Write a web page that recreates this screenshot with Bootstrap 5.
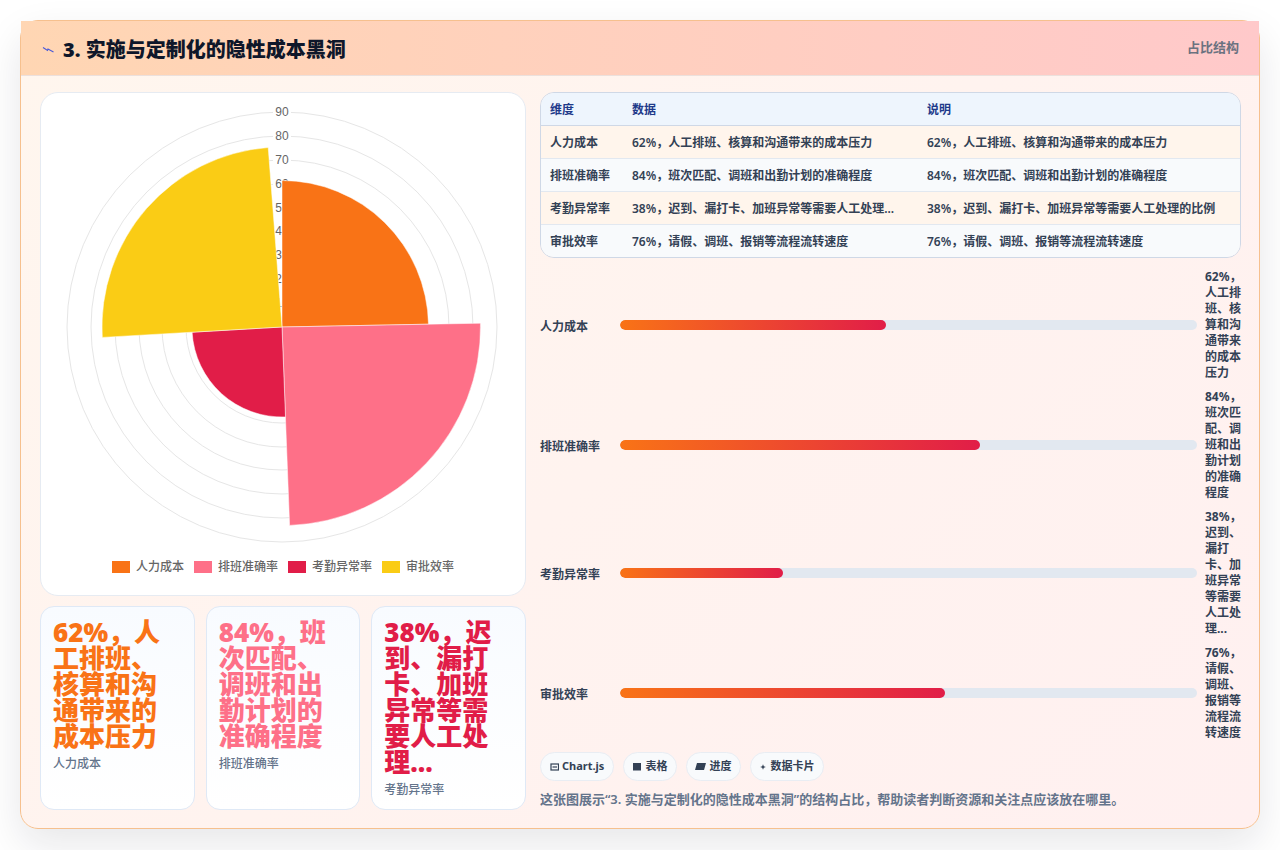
<!DOCTYPE html>
<html lang="zh-CN">
<head>
  <meta charset="UTF-8">
  <title>3. 实施与定制化的隐性成本黑洞</title>
  <link href="https://cdn.jsdelivr.net/npm/bootstrap@5.3.0/dist/css/bootstrap.min.css" rel="stylesheet">
  <style>
    html, body { height: 850px; overflow: hidden; }
    body {
      background: #fff;
      font-family: "Noto Sans", "Noto Sans CJK SC", sans-serif;
      color: #334155;
    }
    .slide {
      width: 1240px;
      height: 809px;
      margin: 20px;
      background: linear-gradient(135deg, #fff6ee, #fff0f0);
      border: 1px solid #f6c08e;
      border-radius: 18px;
      box-shadow: 0 16px 40px rgba(15, 23, 42, .1);
    }
    .slide-head {
      height: 55px;
      padding: 0 20px 0 21px;
      background: linear-gradient(90deg, #ffd6b3, #ffc9ca);
      border-bottom: 1px solid #ece0dc;
    }
    .slide-title { margin-top: 3px; gap: 8px; }
    .slide-head h1 { font-size: 20px; font-weight: 900; color: #0f172a; margin: 0; }
    .slide-tag { font-size: 13px; font-weight: 700; color: #6b7280; }
    .slide-body { padding: 16px 18px 18px 19px; gap: 14px; height: 753px; }
    .col-left { width: 486px; gap: 10px; flex: none; }
    .col-right { width: 701px; flex: none; }
    .chart-box {
      height: 504px;
      background: #fff;
      border: 1px solid #e6ebf2;
      border-radius: 18px;
    }
    .chart-box svg { display: block; }
    .chart-box text { font-family: "Liberation Sans", sans-serif; font-size: 12px; fill: #666; }
    .legend-row { gap: 10px; margin-top: 10px; font-size: 12px; line-height: 16px; color: #666; font-weight: 500; }
    .legend-row i { display: block; width: 18px; height: 12px; margin-right: 6px; }
    .stat-row { gap: 11px; }
    .stat-box {
      flex: 1 1 0;
      height: 204px;
      padding: 12px;
      background: linear-gradient(180deg, #f8fbff, #fff);
      border: 1px solid #dfe9f6;
      border-radius: 14px;
    }
    .stat-val { font-size: 26px; line-height: 26px; font-weight: 900; }
    .stat-name { font-size: 12px; line-height: 16px; margin-top: 7px; font-weight: 500; color: #64748b; }
    .tbl-wrap {
      border: 1px solid #cfd8e6;
      border-radius: 14px;
      overflow: hidden;
      margin-bottom: 11px;
    }
    .tbl-wrap table { table-layout: fixed; margin: 0; font-size: 12px; line-height: 16px; }
    .tbl-wrap th, .tbl-wrap td {
      padding: 9px 9px 7px;
      height: 33px;
      font-weight: 600;
      color: #334155;
      background: transparent;
      border-bottom: 1px solid #e2e8f0;
      white-space: nowrap;
      box-shadow: none;
    }
    .tbl-wrap thead th {
      height: 32px;
      padding: 8px 9px 7px;
      background: #eef5fd;
      color: #1e3a8a;
      font-weight: 700;
      border-bottom-color: #cfd8e6;
    }
    .tbl-wrap tbody tr:nth-child(odd) td { background: #fff5ec; }
    .tbl-wrap tbody tr:nth-child(even) td { background: #f8fafc; }
    .tbl-wrap tbody tr:last-child td { border-bottom: 0; }
    .bars { gap: 8px; }
    .bar-row { gap: 8px; font-size: 12px; line-height: 16px; font-weight: 700; color: #334155; }
    .bar-name { width: 72px; flex: none; padding-top: 3px; }
    .bar-val { width: 36px; flex: none; }
    .bar-track { flex: 1 1 0; height: 10px; background: #e2e8f0; border-radius: 5px; }
    .bar-fill { background: linear-gradient(90deg, #f97316, #e11d48); border-radius: 5px; }
    .chips { gap: 9px; margin-top: 11px; }
    .chip {
      height: 29px;
      padding: 0 8.5px;
      gap: 3px;
      background: #f8fafc;
      border: 1px solid #e9edf3;
      font-size: 11px;
      font-weight: 700;
      color: #334155;
    }
    .note { margin: 9px 0 0; font-size: 13px; line-height: 18px; font-weight: 600; color: #64748b; }
  </style>
</head>
<body>
  <div class="slide">
    <div class="slide-head d-flex align-items-center justify-content-between">
      <div class="slide-title d-flex align-items-center">
        <svg width="13" height="8" viewBox="0 0 13 8" fill="none" stroke="#4a5ad8" stroke-width="1.2"><path d="M1 1.5 5.5 4.4 6 3 11.5 6"/></svg>
        <h1>3. 实施与定制化的隐性成本黑洞</h1>
      </div>
      <div class="slide-tag">占比结构</div>
    </div>

    <div class="slide-body d-flex">
      <div class="col-left d-flex flex-column">
        <div class="chart-box">
          <svg width="484" height="456" viewBox="41 94 484 456">
            <g fill="none" stroke="#e6e6e6">
              <circle cx="282" cy="328" r="24"/><circle cx="282" cy="328" r="48"/>
              <circle cx="282" cy="328" r="72"/><circle cx="282" cy="328" r="96"/>
              <circle cx="282" cy="328" r="120"/><circle cx="282" cy="328" r="143"/>
              <circle cx="282" cy="328" r="167"/><circle cx="282" cy="328" r="191"/>
              <circle cx="282" cy="328" r="215"/>
            </g>
            <g id="ticks"></g>
            <g id="sectors" stroke="#fff" stroke-width=".5"></g>
          </svg>
          <div class="legend-row d-flex justify-content-center">
            <div class="d-flex align-items-center"><i style="background:#f97316"></i>人力成本</div>
            <div class="d-flex align-items-center"><i style="background:#fe7088"></i>排班准确率</div>
            <div class="d-flex align-items-center"><i style="background:#e11d48"></i>考勤异常率</div>
            <div class="d-flex align-items-center"><i style="background:#facc15"></i>审批效率</div>
          </div>
        </div>
        <div class="d-flex stat-row">
          <div class="stat-box">
            <div class="stat-val" style="color:#f97316">62%，人工排班、核算和沟通带来的成本压力</div>
            <div class="stat-name">人力成本</div>
          </div>
          <div class="stat-box">
            <div class="stat-val" style="color:#fe7088">84%，班次匹配、调班和出勤计划的准确程度</div>
            <div class="stat-name">排班准确率</div>
          </div>
          <div class="stat-box">
            <div class="stat-val" style="color:#e11d48">38%，迟到、漏打卡、加班异常等需要人工处理...</div>
            <div class="stat-name">考勤异常率</div>
          </div>
        </div>
      </div>

      <div class="col-right d-flex flex-column">
        <div class="tbl-wrap">
          <table class="table">
            <colgroup><col style="width:82px"><col style="width:295px"><col></colgroup>
            <thead><tr><th>维度</th><th>数据</th><th>说明</th></tr></thead>
            <tbody>
              <tr><td>人力成本</td><td>62%，人工排班、核算和沟通带来的成本压力</td><td>62%，人工排班、核算和沟通带来的成本压力</td></tr>
              <tr><td>排班准确率</td><td>84%，班次匹配、调班和出勤计划的准确程度</td><td>84%，班次匹配、调班和出勤计划的准确程度</td></tr>
              <tr><td>考勤异常率</td><td>38%，迟到、漏打卡、加班异常等需要人工处理...</td><td>38%，迟到、漏打卡、加班异常等需要人工处理的比例</td></tr>
              <tr><td>审批效率</td><td>76%，请假、调班、报销等流程流转速度</td><td>76%，请假、调班、报销等流程流转速度</td></tr>
            </tbody>
          </table>
        </div>

        <div class="bars d-flex flex-column">
          <div class="bar-row d-flex align-items-center">
            <div class="bar-name">人力成本</div>
            <div class="progress bar-track"><div class="progress-bar bar-fill" style="width:46.1%"></div></div>
            <div class="bar-val">62%，人工排班、核算和沟通带来的成本压力</div>
          </div>
          <div class="bar-row d-flex align-items-center">
            <div class="bar-name">排班准确率</div>
            <div class="progress bar-track"><div class="progress-bar bar-fill" style="width:62.4%"></div></div>
            <div class="bar-val">84%，班次匹配、调班和出勤计划的准确程度</div>
          </div>
          <div class="bar-row d-flex align-items-center">
            <div class="bar-name">考勤异常率</div>
            <div class="progress bar-track"><div class="progress-bar bar-fill" style="width:28.2%"></div></div>
            <div class="bar-val">38%，迟到、漏打卡、加班异常等需要人工处理...</div>
          </div>
          <div class="bar-row d-flex align-items-center">
            <div class="bar-name">审批效率</div>
            <div class="progress bar-track"><div class="progress-bar bar-fill" style="width:56.3%"></div></div>
            <div class="bar-val">76%，请假、调班、报销等流程流转速度</div>
          </div>
        </div>

        <div class="chips d-flex">
          <span class="chip rounded-pill d-inline-flex align-items-center">
            <svg width="9.5" height="8" viewBox="0 0 9.5 8" fill="none" stroke="#334155" stroke-width="1.2"><rect x="1" y="1" width="7.5" height="6"/><path d="M2.5 4h4.5"/></svg>Chart.js
          </span>
          <span class="chip rounded-pill d-inline-flex align-items-center">
            <svg width="10" height="8" viewBox="0 0 10 8" fill="#334155"><rect x="1" y="0" width="8" height="7.5"/></svg>表格
          </span>
          <span class="chip rounded-pill d-inline-flex align-items-center">
            <svg width="11" height="7" viewBox="0 0 11 7" fill="#334155"><path d="M2 0h9L9 7H0z"/></svg>进度
          </span>
          <span class="chip rounded-pill d-inline-flex align-items-center">
            <svg width="8" height="8" viewBox="0 0 8 8" fill="#334155"><path d="M4 1.2 4.8 3.2 6.8 4 4.8 4.8 4 6.8 3.2 4.8 1.2 4 3.2 3.2z"/></svg>数据卡片
          </span>
        </div>
        <p class="note">这张图展示“3. 实施与定制化的隐性成本黑洞”的结构占比，帮助读者判断资源和关注点应该放在哪里。</p>
      </div>
    </div>
  </div>

  <script>
    // polar chart: four sectors of 88.9deg, radii in px
    const cx = 282, cy = 328;
    const sectors = [
      { r: 146.5, color: '#f97316' },
      { r: 198.5, color: '#fe7088' },
      { r: 90, color: '#e11d48' },
      { r: 180, color: '#facc15' }
    ];
    const svgNs = 'http://www.w3.org/2000/svg';

    function pt(r, deg) {
      const a = deg * Math.PI / 180;
      return (cx + r * Math.sin(a)).toFixed(1) + ' ' + (cy - r * Math.cos(a)).toFixed(1);
    }

    const ticks = document.getElementById('ticks');
    for (let v = 10; v <= 90; v += 10) {
      const y = cy - v * 2.39;
      const bg = document.createElementNS(svgNs, 'rect');
      bg.setAttribute('x', cx - 9);
      bg.setAttribute('y', y - 7);
      bg.setAttribute('width', 18);
      bg.setAttribute('height', 14);
      bg.setAttribute('fill', '#fff');
      ticks.appendChild(bg);
      const t = document.createElementNS(svgNs, 'text');
      t.setAttribute('x', cx);
      t.setAttribute('y', y + 4);
      t.setAttribute('text-anchor', 'middle');
      t.textContent = v;
      ticks.appendChild(t);
    }

    const group = document.getElementById('sectors');
    sectors.forEach((s, i) => {
      const p = document.createElementNS(svgNs, 'path');
      p.setAttribute('d', `M${cx} ${cy}L${pt(s.r, i * 88.9)}A${s.r} ${s.r} 0 0 1 ${pt(s.r, (i + 1) * 88.9)}Z`);
      p.setAttribute('fill', s.color);
      group.appendChild(p);
    });
  </script>
  <script src="https://cdn.jsdelivr.net/npm/bootstrap@5.3.0/dist/js/bootstrap.bundle.min.js"></script>
</body>
</html>
